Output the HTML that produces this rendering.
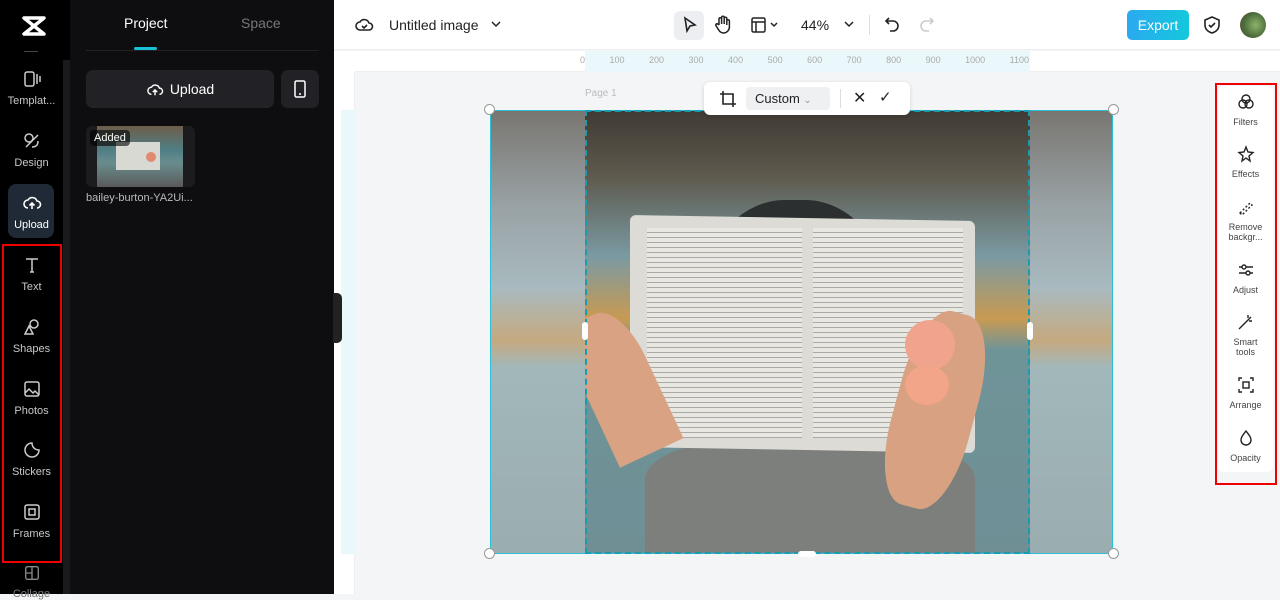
<!DOCTYPE html>
<html><head><meta charset="utf-8"><style>
*{box-sizing:border-box;margin:0;padding:0}
body{width:1280px;height:594px;overflow:hidden;font-family:"Liberation Sans",sans-serif;background:#f4f5f7;position:relative}
.abs{position:absolute}
.lb{left:0;top:0;width:70px;height:594px;background:#000}
.nav{position:absolute;left:0;width:63px;text-align:center;color:#c8c8cc;font-size:11px}
.nav svg{display:block;margin:0 auto 6px}
.panel{left:70px;top:0;width:264px;height:594px;background:#0e0e10}
.top{left:334px;top:0;width:946px;height:50px;background:#fff;border-bottom:1px solid #eee}
.rp{left:1218px;top:86px;width:55px;height:386px;background:#fff;border-radius:6px}
.ri{position:absolute;left:0;width:55px;text-align:center;font-size:9px;color:#444;line-height:10px}
.ri svg{display:block;margin:0 auto 5px}
</style></head><body>
<div class="abs lb"></div>
<div class="abs" style="left:63px;top:60px;width:7px;height:534px;background:#1a1a1c"></div>
<svg class="abs" style="left:21px;top:15px" width="26" height="22" viewBox="0 0 26 22" fill="none" stroke="#fff" stroke-width="3.5" stroke-linejoin="round"><path d="M3 3h20L3 19h20z"/></svg>
<div class="abs" style="left:24px;top:51px;width:14px;height:1px;background:#444"></div>
<div class="nav" style="top:69px"><svg width="20" height="20" viewBox="0 0 20 20" fill="none" stroke="#ccc" stroke-width="1.5"><rect x="3" y="3" width="9" height="14" rx="2"/><path d="M15 5v10M18 7v6"/></svg>Templat...</div>
<div class="nav" style="top:131px"><svg width="20" height="20" viewBox="0 0 20 20" fill="none" stroke="#ccc" stroke-width="1.5"><circle cx="7" cy="7" r="4"/><path d="M4 16l12-12M10 16c4 0 6-2 6-6"/></svg>Design</div>
<div class="abs" style="left:8px;top:184px;width:46px;height:54px;background:#1f2a36;border-radius:8px"></div>
<div class="nav" style="top:193px;color:#fff"><svg width="20" height="20" viewBox="0 0 20 20" fill="none" stroke="#fff" stroke-width="1.6"><path d="M6 15a4 4 0 010-8 5 5 0 019 1 3.5 3.5 0 010 7M10 10v6M7.5 12.5L10 10l2.5 2.5"/></svg>Upload</div>
<div class="abs" style="left:2px;top:244px;width:60px;height:319px;border:2px solid #e00"></div>
<div class="nav" style="top:255px"><svg width="20" height="20" viewBox="0 0 20 20" fill="none" stroke="#ccc" stroke-width="1.5"><path d="M4 4h12M10 4v13M8 17h4"/></svg>Text</div>
<div class="nav" style="top:317px"><svg width="20" height="20" viewBox="0 0 20 20" fill="none" stroke="#ccc" stroke-width="1.5"><circle cx="12" cy="7" r="4"/><path d="M3 17l4-8 4 8z"/></svg>Shapes</div>
<div class="nav" style="top:379px"><svg width="20" height="20" viewBox="0 0 20 20" fill="none" stroke="#ccc" stroke-width="1.5"><rect x="3" y="3" width="14" height="14" rx="2"/><path d="M3 14l4-4 4 4 2-2 4 4"/></svg>Photos</div>
<div class="nav" style="top:440px"><svg width="20" height="20" viewBox="0 0 20 20" fill="none" stroke="#ccc" stroke-width="1.5"><path d="M17 10a7 7 0 11-7-7c0 4 3 7 7 7z"/></svg>Stickers</div>
<div class="nav" style="top:502px"><svg width="20" height="20" viewBox="0 0 20 20" fill="none" stroke="#ccc" stroke-width="1.5"><rect x="3" y="3" width="14" height="14" rx="2"/><rect x="7" y="7" width="6" height="6"/></svg>Frames</div>
<div class="nav" style="top:564px;color:#777"><svg width="18" height="18" viewBox="0 0 20 20" fill="none" stroke="#888" stroke-width="1.5"><rect x="3" y="3" width="14" height="14" rx="2"/><path d="M10 3v14M3 10h7"/></svg>Collage</div>

<div class="abs panel"></div>
<div class="abs" style="left:124px;top:15px;color:#fff;font-size:14px">Project</div>
<div class="abs" style="left:241px;top:15px;color:#777;font-size:14px">Space</div>
<div class="abs" style="left:86px;top:50px;width:233px;height:1px;background:#222"></div>
<div class="abs" style="left:134px;top:47px;width:23px;height:3px;background:#18c1d8;border-radius:2px"></div>
<div class="abs" style="left:86px;top:70px;width:188px;height:38px;background:#222226;border-radius:7px;color:#fff;font-size:14px;text-align:center;line-height:38px"><svg width="18" height="16" viewBox="0 0 20 18" fill="none" stroke="#fff" stroke-width="1.6" style="vertical-align:-3px;margin-right:6px"><path d="M6 15a4 4 0 010-8 5 5 0 019 1 3.5 3.5 0 010 7M10 10v6M7.5 12.5L10 10l2.5 2.5"/></svg>Upload</div>
<div class="abs" style="left:281px;top:70px;width:38px;height:38px;background:#222226;border-radius:7px"><svg width="38" height="38" viewBox="0 0 38 38" fill="none" stroke="#fff" stroke-width="1.5"><rect x="14" y="11" width="10" height="16" rx="1.5"/><path d="M18 24h2"/></svg></div>
<div class="abs" style="left:86px;top:126px;width:109px;height:61px;background:#1c1c1f;border-radius:6px;overflow:hidden">
<div class="abs" style="left:11px;top:0;width:86px;height:61px;background:linear-gradient(180deg,#6e5d4a 0,#4f7f86 40%,#6a8c8e 60%,#5a5a5a 100%)"></div>
<div class="abs" style="left:30px;top:16px;width:44px;height:28px;background:#d9d9d4"></div>
<div class="abs" style="left:60px;top:26px;width:10px;height:10px;background:#e08a70;border-radius:50%"></div>
<div class="abs" style="left:4px;top:4px;background:rgba(0,0,0,.6);color:#fff;font-size:11px;padding:2px 4px;border-radius:4px">Added</div></div>
<div class="abs" style="left:86px;top:192px;color:#bbb;font-size:11px">bailey-burton-YA2Ui...</div>

<div class="abs top"></div>
<svg class="abs" style="left:354px;top:15px" width="20" height="20" viewBox="0 0 20 20" fill="none" stroke="#222" stroke-width="1.6"><path d="M6 15a4 4 0 010-8 5 5 0 019 1 3.5 3.5 0 010 7z M8 11l2 2 3-3"/></svg>
<div class="abs" style="left:389px;top:17px;font-size:14px;color:#222">Untitled image</div>
<svg class="abs" style="left:490px;top:20px" width="12" height="10"><path d="M2 2l4 4 4-4" fill="none" stroke="#222" stroke-width="1.5"/></svg>
<div class="abs" style="left:674px;top:11px;width:30px;height:29px;background:#eceef1;border-radius:6px"></div>
<svg class="abs" style="left:680px;top:15px" width="20" height="20" viewBox="0 0 20 20" fill="none" stroke="#222" stroke-width="1.6"><path d="M5 3l10 7-5 1-3 5z"/></svg>
<svg class="abs" style="left:713px;top:14px" width="20" height="22" viewBox="0 0 20 22" fill="none" stroke="#222" stroke-width="1.5"><path d="M6 11V5a1.3 1.3 0 012.6 0v5M8.6 9V3.5a1.3 1.3 0 012.6 0V10M11.2 9V4.5a1.3 1.3 0 012.6 0V11M13.8 10V7a1.3 1.3 0 012.6 0v6a6 6 0 01-6 6c-3 0-4-2-6-5l-1.5-2.5a1.2 1.2 0 012-1.3L6 11"/></svg>
<svg class="abs" style="left:750px;top:16px" width="32" height="18" viewBox="0 0 32 18" fill="none" stroke="#222" stroke-width="1.5"><rect x="2" y="2" width="13" height="14" rx="1.5"/><path d="M2 6h13M6 6v10M21 7l3 3 3-3"/></svg>
<div class="abs" style="left:801px;top:17px;font-size:14px;color:#222">44%</div>
<svg class="abs" style="left:843px;top:20px" width="12" height="10"><path d="M2 2l4 4 4-4" fill="none" stroke="#222" stroke-width="1.5"/></svg>
<div class="abs" style="left:869px;top:15px;width:1px;height:20px;background:#ddd"></div>
<svg class="abs" style="left:884px;top:15px" width="18" height="20" viewBox="0 0 18 20" fill="none" stroke="#222" stroke-width="1.6"><path d="M5 3L2 6l3 3M2 6h7a5 5 0 010 10H6"/></svg>
<svg class="abs" style="left:917px;top:15px" width="18" height="20" viewBox="0 0 18 20" fill="none" stroke="#ccc" stroke-width="1.6"><path d="M13 3l3 3-3 3M16 6H9a5 5 0 000 10h3"/></svg>
<div class="abs" style="left:1127px;top:10px;width:62px;height:30px;background:linear-gradient(90deg,#2ba9f0,#14c8dc);border-radius:5px;color:#fff;font-size:14px;text-align:center;line-height:30px">Export</div>
<svg class="abs" style="left:1202px;top:15px" width="20" height="20" viewBox="0 0 20 20" fill="none" stroke="#222" stroke-width="1.6"><path d="M10 2l7 3v5c0 4-3 7-7 8-4-1-7-4-7-8V5z M7 10l2 2 4-4"/></svg>
<div class="abs" style="left:1240px;top:12px;width:26px;height:26px;border-radius:50%;background:radial-gradient(circle at 60% 50%,#8cb46a,#4a6a3a 60%,#6b4a3a)"></div>

<!-- ruler -->
<div class="abs" style="left:334px;top:51px;width:946px;height:21px;background:#fff;border-bottom:1px solid #eee"></div>
<div class="abs" style="left:585px;top:51px;width:445px;height:21px;background:#eaf8fb"></div>
<div class="abs" style="left:334px;top:72px;width:21px;height:522px;background:#fff;border-right:1px solid #eee"></div>
<div class="abs" style="left:341px;top:110px;width:14px;height:444px;background:#eaf8fb"></div>
<div class="abs" style="left:580px;top:55px;font-size:9px;color:#aaa;word-spacing:22px;letter-spacing:0">0 100 200 300 400 500 600 700 800 900 1000 1100</div>
<div class="abs" style="left:334px;top:51px;width:21px;height:21px;background:#fff"></div>
<div class="abs" style="left:333px;top:293px;width:9px;height:50px;background:#222;border-radius:0 5px 5px 0"></div>

<!-- photo -->
<div class="abs" style="left:490px;top:110px;width:623px;height:444px;background:linear-gradient(180deg,#4f4b44 0,#7b878a 22%,#8fa7ad 40%,#b69058 52%,#86a3a6 58%,#7c9598 100%);opacity:.75"></div>
<div class="abs" style="left:585px;top:110px;width:445px;height:444px;overflow:hidden;background:linear-gradient(180deg,#3f3a33 0,#5e5a4e 15%,#7a9aa2 33%,#c89a52 47%,#6f9498 54%,#6f8f95 100%)">
<div class="abs" style="left:110px;top:90px;width:200px;height:260px;border-radius:45%;background:#2b2f2f"></div>
<div class="abs" style="left:60px;top:330px;width:330px;height:130px;background:#7d7f7c;border-radius:30% 30% 0 0"></div>
<div class="abs" style="left:45px;top:108px;width:345px;height:232px;background:#dcdbd5;transform:skewY(1deg);border-radius:6px"></div>
<div class="abs" style="left:62px;top:118px;width:155px;height:210px;background:repeating-linear-gradient(180deg,#e8e7e2 0 4px,#a9a9a5 4px 5px)"></div>
<div class="abs" style="left:228px;top:118px;width:150px;height:210px;background:repeating-linear-gradient(180deg,#e8e7e2 0 4px,#a9a9a5 4px 5px)"></div>
<div class="abs" style="left:0;top:200px;width:70px;height:150px;background:#d9a283;border-radius:40% 40% 0 0;transform:rotate(-25deg)"></div>
<div class="abs" style="left:310px;top:200px;width:80px;height:200px;background:#d7a182;border-radius:40%;transform:rotate(15deg)"></div>
<div class="abs" style="left:320px;top:210px;width:50px;height:50px;background:#f0a48e;border-radius:50%"></div>
<div class="abs" style="left:320px;top:255px;width:44px;height:40px;background:#f2a589;border-radius:50%"></div>
</div>
<div class="abs" style="left:490px;top:110px;width:623px;height:444px;border:1.5px solid #2bc0d6"></div>
<div class="abs" style="left:585px;top:110px;width:445px;height:444px;border:2px dashed #1a9bb0"></div>
<div class="abs" style="left:585px;top:88px;font-size:10px;color:#bbb">Page 1</div>
<div class="abs" style="left:484px;top:104px;width:11px;height:11px;border-radius:50%;background:#fff;border:1px solid #999"></div>
<div class="abs" style="left:1108px;top:104px;width:11px;height:11px;border-radius:50%;background:#fff;border:1px solid #999"></div>
<div class="abs" style="left:484px;top:548px;width:11px;height:11px;border-radius:50%;background:#fff;border:1px solid #999"></div>
<div class="abs" style="left:1108px;top:548px;width:11px;height:11px;border-radius:50%;background:#fff;border:1px solid #999"></div>
<div class="abs" style="left:582px;top:322px;width:6px;height:18px;border-radius:3px;background:#fff"></div>
<div class="abs" style="left:1027px;top:322px;width:6px;height:18px;border-radius:3px;background:#fff"></div>
<div class="abs" style="left:798px;top:551px;width:18px;height:6px;border-radius:3px;background:#fff"></div>

<!-- crop toolbar -->
<div class="abs" style="left:704px;top:82px;width:206px;height:33px;background:#fff;border-radius:6px;box-shadow:0 1px 4px rgba(0,0,0,.15)"></div>
<svg class="abs" style="left:718px;top:89px" width="20" height="20" viewBox="0 0 20 20" fill="none" stroke="#222" stroke-width="1.6"><path d="M5 2v13h13M2 5h13v13"/></svg>
<div class="abs" style="left:746px;top:87px;width:84px;height:23px;background:#eef0f2;border-radius:4px;font-size:13px;color:#222;line-height:23px;padding-left:9px">Custom <span style="color:#999;font-size:10px">⌄</span></div>
<div class="abs" style="left:840px;top:89px;width:1px;height:19px;background:#ddd"></div>
<div class="abs" style="left:853px;top:88px;font-size:16px;color:#222">✕</div>
<div class="abs" style="left:879px;top:88px;font-size:15px;color:#222">✓</div>

<!-- right panel -->
<div class="abs rp"></div>
<div class="abs" style="left:1215px;top:83px;width:62px;height:402px;border:2px solid #e00"></div>
<div class="ri" style="left:1218px;top:92px"><svg width="20" height="20" viewBox="0 0 20 20" fill="none" stroke="#222" stroke-width="1.4"><circle cx="10" cy="7" r="4"/><circle cx="7" cy="12" r="4"/><circle cx="13" cy="12" r="4"/></svg>Filters</div>
<div class="ri" style="left:1218px;top:144px"><svg width="20" height="20" viewBox="0 0 20 20" fill="none" stroke="#222" stroke-width="1.4"><path d="M10 3l2 5 5 .5-4 3.5 1 5-4-3-4 3 1-5-4-3.5 5-.5z"/></svg>Effects</div>
<div class="ri" style="left:1218px;top:197px"><svg width="20" height="20" viewBox="0 0 20 20" fill="none" stroke="#222" stroke-width="1.4" stroke-dasharray="2 2"><path d="M4 16l10-10 2 2-10 10z"/></svg>Remove<br>backgr...</div>
<div class="ri" style="left:1218px;top:260px"><svg width="20" height="20" viewBox="0 0 20 20" fill="none" stroke="#222" stroke-width="1.4"><path d="M3 7h14M3 13h14"/><circle cx="8" cy="7" r="2" fill="#fff"/><circle cx="12" cy="13" r="2" fill="#fff"/></svg>Adjust</div>
<div class="ri" style="left:1218px;top:312px"><svg width="20" height="20" viewBox="0 0 20 20" fill="none" stroke="#222" stroke-width="1.4"><path d="M3 17l10-10M12 3v3M15 5l-2 2M16 9h-3"/></svg>Smart<br>tools</div>
<div class="ri" style="left:1218px;top:375px"><svg width="20" height="20" viewBox="0 0 20 20" fill="none" stroke="#222" stroke-width="1.4"><path d="M3 6V3h3M14 3h3v3M17 14v3h-3M6 17H3v-3"/><rect x="7" y="7" width="6" height="6"/></svg>Arrange</div>
<div class="ri" style="left:1218px;top:428px"><svg width="20" height="20" viewBox="0 0 20 20" fill="none" stroke="#222" stroke-width="1.4"><path d="M10 3c3 4 5 6 5 9a5 5 0 01-10 0c0-3 2-5 5-9z"/></svg>Opacity</div>
</body></html>
